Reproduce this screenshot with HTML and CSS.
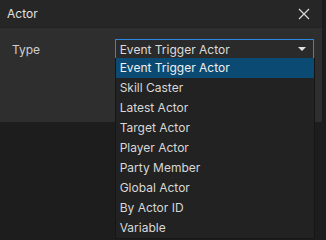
FILE: index.html
```html
<!DOCTYPE html>
<html lang="en">
<head>
    <meta charset="UTF-8">
    <title>Actor</title>
    <link rel="stylesheet" href="styles.css">
</head>
<body>

    <div class="dialog">
        <div class="titlebar">
            <span class="title">Actor</span>
            <button class="close" type="button">
                <svg width="12" height="12" viewBox="0 0 12 12">
                    <path d="M1 1 L11 11 M11 1 L1 11" stroke="#d8d8d8" stroke-width="1.2" fill="none"/>
                </svg>
            </button>
        </div>
        <div class="content">
            <div class="row">
                <label class="label">Type</label>
                <div class="select-wrap">
                    <div class="select">
                        <span>Event Trigger Actor</span>
                        <span class="arrow"></span>
                    </div>
                    <!-- open dropdown list -->
                    <ul class="options">
                        <li class="active">Event Trigger Actor</li>
                        <li>Skill Caster</li>
                        <li>Latest Actor</li>
                        <li>Target Actor</li>
                        <li>Player Actor</li>
                        <li>Party Member</li>
                        <li>Global Actor</li>
                        <li>By Actor ID</li>
                        <li>Variable</li>
                    </ul>
                </div>
            </div>
        </div>
    </div>

</body>
</html>
```

FILE: styles.css
```css
body {
    margin: 0;
    background-color: #1d1d1d;
    font-family: 'Inter', 'Noto Sans', sans-serif;
    font-size: 12px;
    color: #dcdcdc;
    width: 326px;
    height: 240px;
    overflow: hidden;
}

.dialog {
    width: 323px;
    height: 122px;
    background-color: #2e2e2e;
    border-right: 1px solid #1a1a1a;
    box-sizing: border-box;
}

.titlebar {
    height: 28px;
    background-color: #262626;
    border-bottom: 1px solid #222;
    display: flex;
    align-items: center;
    justify-content: space-between;
    padding: 0 12px 0 7px;
    box-sizing: border-box;
}

.title {
    color: #e0e0e0;
}

.close {
    background: none;
    border: none;
    padding: 0;
    display: flex;
    cursor: pointer;
}

.content {
    padding: 11px 8px 0 12px;
}

.row {
    display: flex;
    align-items: center;
}

.label {
    width: 103px;
    color: #d0d0d0;
}

.select-wrap {
    position: relative;
    width: 200px;
}

.select {
    border: 1px solid #2b86e0;
    background-color: #2a2a2a;
    display: flex;
    align-items: center;
    justify-content: space-between;
    padding: 0 7px 0 4px;
    box-sizing: border-box;
    height: 20px;
}

.arrow {
    width: 0;
    height: 0;
    border-left: 4px solid transparent;
    border-right: 4px solid transparent;
    border-top: 4px solid #e0e0e0;
}

.options {
    position: absolute;
    top: 19px;
    left: 0;
    width: 200px;
    margin: 0;
    padding: 0;
    list-style: none;
    background-color: #222;
    border: 1px solid #161616;
    border-top: none;
    box-sizing: border-box;
}

.options li {
    height: 20px;
    line-height: 20px;
    padding-left: 4px;
    color: #d8d8d8;
}

.options li.active {
    background-color: #0b4a72;
    color: #f0f0f0;
}
```
